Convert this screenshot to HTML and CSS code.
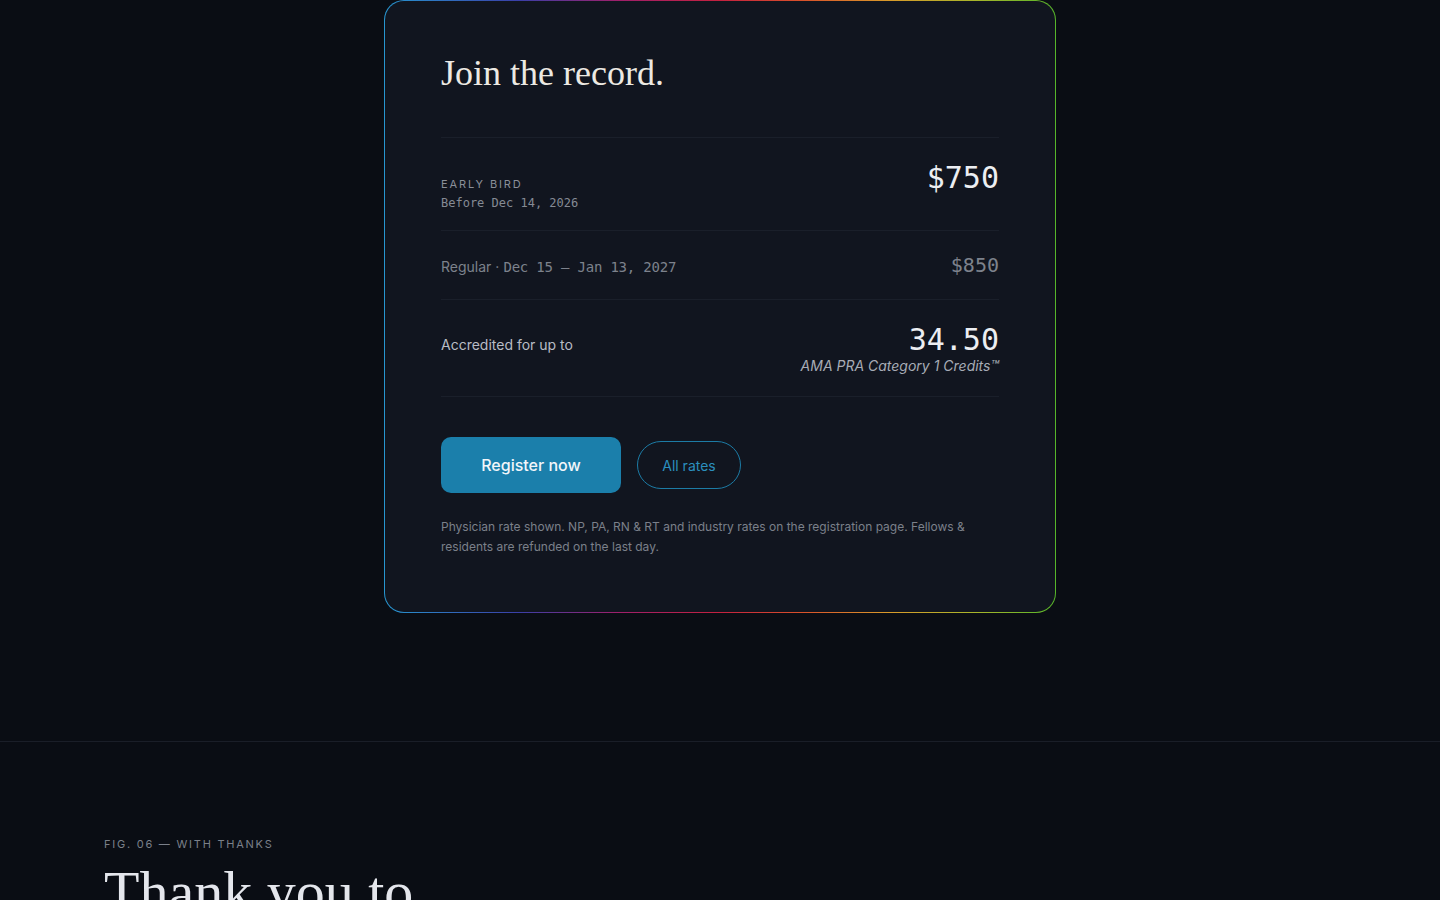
FILE: index.html
```html
<!DOCTYPE html>
<html>
<head>
    <meta charset="UTF-8">
    <title>Join the record</title>
    <link rel="stylesheet" href="styles.css">
</head>
<body>
    <section class="register">
        <div class="rate-card">
            <h2 class="rate-title">Join the record.</h2>
            <div class="rate-list">
                <div class="rate-row rate-row-early">
                    <div class="rate-label">
                        <span class="eyebrow">Early bird</span>
                        <span class="rate-date">Before Dec 14, 2026</span>
                    </div>
                    <span class="price price-main">$750</span>
                </div>
                <div class="rate-row rate-row-regular">
                    <div class="rate-label-inline">
                        <span class="rate-name">Regular</span>
                        <span class="dot">&middot;</span>
                        <span class="rate-date-lg">Dec 15 &ndash; Jan 13, 2027</span>
                    </div>
                    <span class="price price-muted">$850</span>
                </div>
                <div class="rate-row rate-row-credits">
                    <span class="credits-label">Accredited for up to</span>
                    <div class="credits">
                        <span class="price price-main">34.50</span>
                        <span class="credits-note">AMA PRA Category 1 Credits&trade;</span>
                    </div>
                </div>
            </div>
            <div class="actions">
                <a class="btn btn-primary" href="#">Register now</a>
                <a class="btn btn-outline" href="#">All rates</a>
            </div>
            <p class="footnote">Physician rate shown. NP, PA, RN &amp; RT and industry rates on the registration page. Fellows &amp; residents are refunded on the last day.</p>
        </div>
    </section>
    <section class="thanks">
        <div class="thanks-inner">
            <p class="eyebrow eyebrow-fig">Fig. 06 &mdash; With thanks</p>
            <h2 class="thanks-title">Thank you to</h2>
        </div>
    </section>
</body>
</html>
```

FILE: styles.css
```css
body {
    margin: 0;
    background-color: #0a0d14;
    font-family: Inter, "Noto Sans", sans-serif;
    color: #e6e8ee;
}
a {
    text-decoration: none;
}

/* registration card */
.register {
    padding-bottom: 128px;
}
.rate-card {
    width: 672px;
    box-sizing: border-box;
    margin: 0 auto;
    padding: 51px 56px 55px;
    border: 1px solid transparent;
    border-radius: 20px;
    background:
        linear-gradient(#11151f, #11151f) padding-box,
        linear-gradient(90deg, #2796d0 0%, #3a3fa8 20%, #a01f6a 35%, #c4213f 50%, #d9502a 62%, #d99a2a 75%, #a8b52a 88%, #56b52a 100%) border-box;
}
.rate-title {
    margin: 0 0 42px;
    font-family: "Liberation Serif", serif;
    font-weight: 400;
    font-size: 36px;
    line-height: 1.2;
    color: #ece9e3;
}
.rate-list {
    border-bottom: 1px solid #1a1f2a;
}
.rate-row {
    display: flex;
    justify-content: space-between;
    align-items: baseline;
    border-top: 1px solid #1a1f2a;
}
.rate-row-early {
    padding: 25px 0 18px;
}
.rate-row-regular {
    padding: 24px 0 22px;
}
.rate-row-credits {
    padding: 25px 0 20px;
}
.rate-label {
    display: flex;
    flex-direction: column;
}
.eyebrow {
    font-size: 11px;
    line-height: 16px;
    letter-spacing: 0.17em;
    text-transform: uppercase;
    color: #8a8f99;
}
.rate-date {
    margin-top: 2px;
    font-family: "DejaVu Sans Mono", monospace;
    font-size: 12px;
    line-height: 18px;
    color: #858a94;
}
.rate-label-inline {
    display: flex;
    align-items: baseline;
    gap: 4px;
    font-size: 14px;
    line-height: 20px;
    color: #7d828c;
}
.rate-date-lg {
    font-family: "DejaVu Sans Mono", monospace;
    font-size: 14px;
    letter-spacing: -0.2px;
}
.price {
    font-family: "DejaVu Sans Mono", monospace;
    line-height: 1;
}
.price-main {
    font-size: 30px;
    color: #eceef2;
}
.price-muted {
    font-size: 20px;
    color: #7d828c;
}
.credits-label {
    font-size: 14px;
    line-height: 20px;
    color: #b8bcc5;
}
.credits {
    display: flex;
    flex-direction: column;
    align-items: flex-end;
}
.credits-note {
    margin-top: 1px;
    font-size: 14px;
    line-height: 20px;
    font-style: italic;
    color: #a7acb6;
}

/* buttons */
.actions {
    display: flex;
    align-items: center;
    gap: 16px;
    margin-top: 40px;
}
.btn {
    display: inline-flex;
    align-items: center;
    justify-content: center;
    box-sizing: border-box;
}
.btn-primary {
    width: 180px;
    height: 56px;
    border-radius: 10px;
    background-color: #1b7fab;
    color: #f2f6fa;
    font-size: 16px;
    font-weight: 500;
}
.btn-outline {
    width: 104px;
    height: 48px;
    border: 1px solid #1c7ba5;
    border-radius: 24px;
    color: #2b8fbe;
    font-size: 14px;
}
.footnote {
    margin: 24px 0 0;
    font-size: 12px;
    line-height: 20px;
    color: #7b808a;
}

/* thanks section */
.thanks {
    border-top: 1px solid #1a1e28;
    padding-top: 94px;
}
.thanks-inner {
    width: 1232px;
    margin: 0 auto;
}
.eyebrow-fig {
    margin: 0;
    letter-spacing: 0.16em;
    color: #7b808a;
}
.thanks-title {
    margin: 8px 0 0;
    font-family: "Liberation Serif", serif;
    font-weight: 400;
    font-size: 58px;
    line-height: 1.1;
    color: #e4e6ec;
}
```
